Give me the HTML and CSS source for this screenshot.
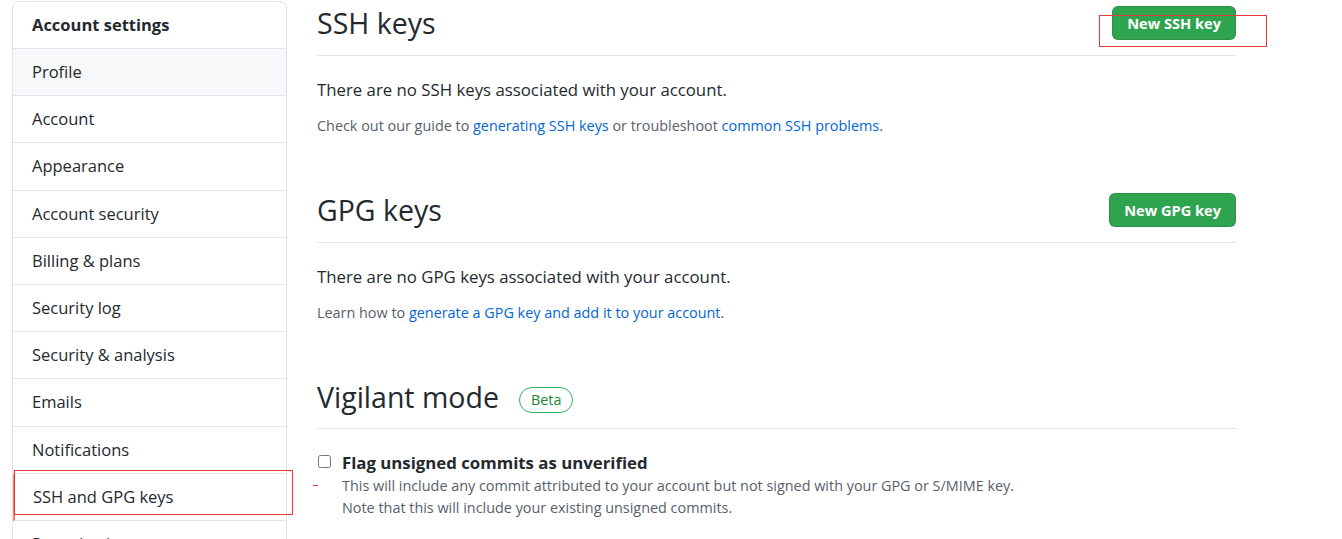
FILE: index.html
```html
<!DOCTYPE html>
<html lang="en">
<head>
<meta charset="utf-8">
<title>SSH and GPG keys</title>
<link rel="stylesheet" href="styles.css">
</head>
<body>
<div class="page">
  <nav class="menu">
    <div class="menu-heading">Account settings</div>
    <a class="menu-item hover" href="#">Profile</a>
    <a class="menu-item" href="#">Account</a>
    <a class="menu-item" href="#">Appearance</a>
    <a class="menu-item" href="#">Account security</a>
    <a class="menu-item" href="#">Billing &amp; plans</a>
    <a class="menu-item" href="#">Security log</a>
    <a class="menu-item" href="#">Security &amp; analysis</a>
    <a class="menu-item" href="#">Emails</a>
    <a class="menu-item" href="#">Notifications</a>
    <a class="menu-item selected" href="#">SSH and GPG keys<span class="mark mark-menu"></span></a>
    <a class="menu-item" href="#">Repositories</a>
  </nav>
  <main class="content">
    <section class="block first">
      <div class="subhead">
        <h2 class="subhead-title">SSH keys</h2>
        <a class="btn-primary" href="#">New SSH key<span class="mark mark-btn"></span></a>
      </div>
      <p class="lead">There are no SSH keys associated with your account.</p>
      <p class="note">Check out our guide to <a href="#">generating SSH keys</a> or troubleshoot <a href="#">common SSH problems</a>.</p>
    </section>
    <section class="block">
      <div class="subhead">
        <h2 class="subhead-title">GPG keys</h2>
        <a class="btn-primary" href="#">New GPG key</a>
      </div>
      <p class="lead">There are no GPG keys associated with your account.</p>
      <p class="note">Learn how to <a href="#">generate a GPG key and add it to your account</a>.</p>
    </section>
    <section class="block">
      <div class="subhead plain">
        <h2 class="subhead-title">Vigilant mode <span class="badge">Beta</span></h2>
      </div>
      <div class="check">
        <span class="dash"></span>
        <input type="checkbox" class="check-input" id="vig">
        <div class="check-body">
          <label class="check-label" for="vig">Flag unsigned commits as unverified</label>
          <p class="check-note">This will include any commit attributed to your account but not signed with your GPG or S/MIME key.<br>Note that this will include your existing unsigned commits.</p>
        </div>
      </div>
    </section>
  </main>
</div>
</body>
</html>
```
FILE: styles.css
```css
* { box-sizing: border-box; }
html, body { margin: 0; padding: 0; background: #fff; }
body {
  font-family: "Open Sans", "Noto Sans", "Liberation Sans", sans-serif;
  color: #24292e;
  overflow: hidden;
}
a { text-decoration: none; color: #0366d6; }
.page {
  display: flex;
  align-items: flex-start;
  gap: 30px;
  padding-left: 12px;
}
.menu {
  width: 275px;
  flex: none;
  margin-top: 1px;
  border: 1px solid #e1e4e8;
  border-radius: 7px;
  display: flex;
  flex-direction: column;
}
.menu-heading {
  font-weight: 700;
  font-size: 16.5px;
  line-height: 22px;
  padding: 12px 19px 12px;
  border-bottom: 1px solid #e1e4e8;
  height: 47px;
}
.menu-item {
  position: relative;
  display: block;
  font-size: 16.5px;
  line-height: 22px;
  padding: 12px 19px;
  height: 47.2px;
  color: #24292e;
  border-bottom: 1px solid #e1e4e8;
}
.menu-item.hover { background: #f6f8fa; }
.menu-item.selected { border-left: 2px solid #f9826c; padding-left: 18px; }
.mark { position: absolute; border: 1px solid #e8393a; pointer-events: none; }
.mark-menu { left: -1px; top: -4px; width: 279px; height: 45px; }
.content {
  width: 919px;
  flex: none;
  padding-top: 6px;
}
.block { margin-top: 57px; }
.block.first { margin-top: 0; }
.subhead {
  display: flex;
  align-items: center;
  justify-content: space-between;
  border-bottom: 1px solid #e1e4e8;
  padding-bottom: 15px;
  height: 50px;
}
.subhead.plain { height: 49px; padding-bottom: 14px; }
.subhead-title {
  margin: 0;
  font-size: 28.5px;
  font-weight: 400;
  line-height: 34px;
  display: flex;
  align-items: center;
}
.btn-primary {
  position: relative;
  display: inline-block;
  background: #2ea44f;
  color: #fff;
  font-weight: 700;
  font-size: 14.6px;
  line-height: 20px;
  padding: 6px 14px;
  height: 34px;
  border: 1px solid rgba(27,31,35,.15);
  border-radius: 6px;
}
.mark-btn { left: -14px; top: 8px; width: 168px; height: 32px; }
.lead {
  margin: 22px 0 0;
  font-size: 16.8px;
  line-height: 24px;
}
.note {
  margin: 14px 0 0;
  font-size: 14.4px;
  line-height: 20px;
  color: #586069;
}
.badge {
  display: inline-block;
  margin: 6px 0 0 20px;
  font-size: 14.4px;
  line-height: 22px;
  padding: 1px 11px;
  border: 1px solid #34b05a;
  border-radius: 20px;
  color: #22863a;
}
.check {
  position: relative;
  display: flex;
  align-items: flex-start;
  margin-top: 22px;
}
.check-input {
  margin: 4px 11px 0 1px;
  width: 13px;
  height: 13px;
}
.dash {
  position: absolute;
  left: -4px;
  top: 34px;
  width: 5px;
  height: 1px;
  background: #e8393a;
}
.check-label {
  display: block;
  font-weight: 700;
  font-size: 16.8px;
  line-height: 24px;
}
.check-note {
  margin: 0;
  font-size: 14.4px;
  line-height: 22px;
  color: #586069;
}
```
